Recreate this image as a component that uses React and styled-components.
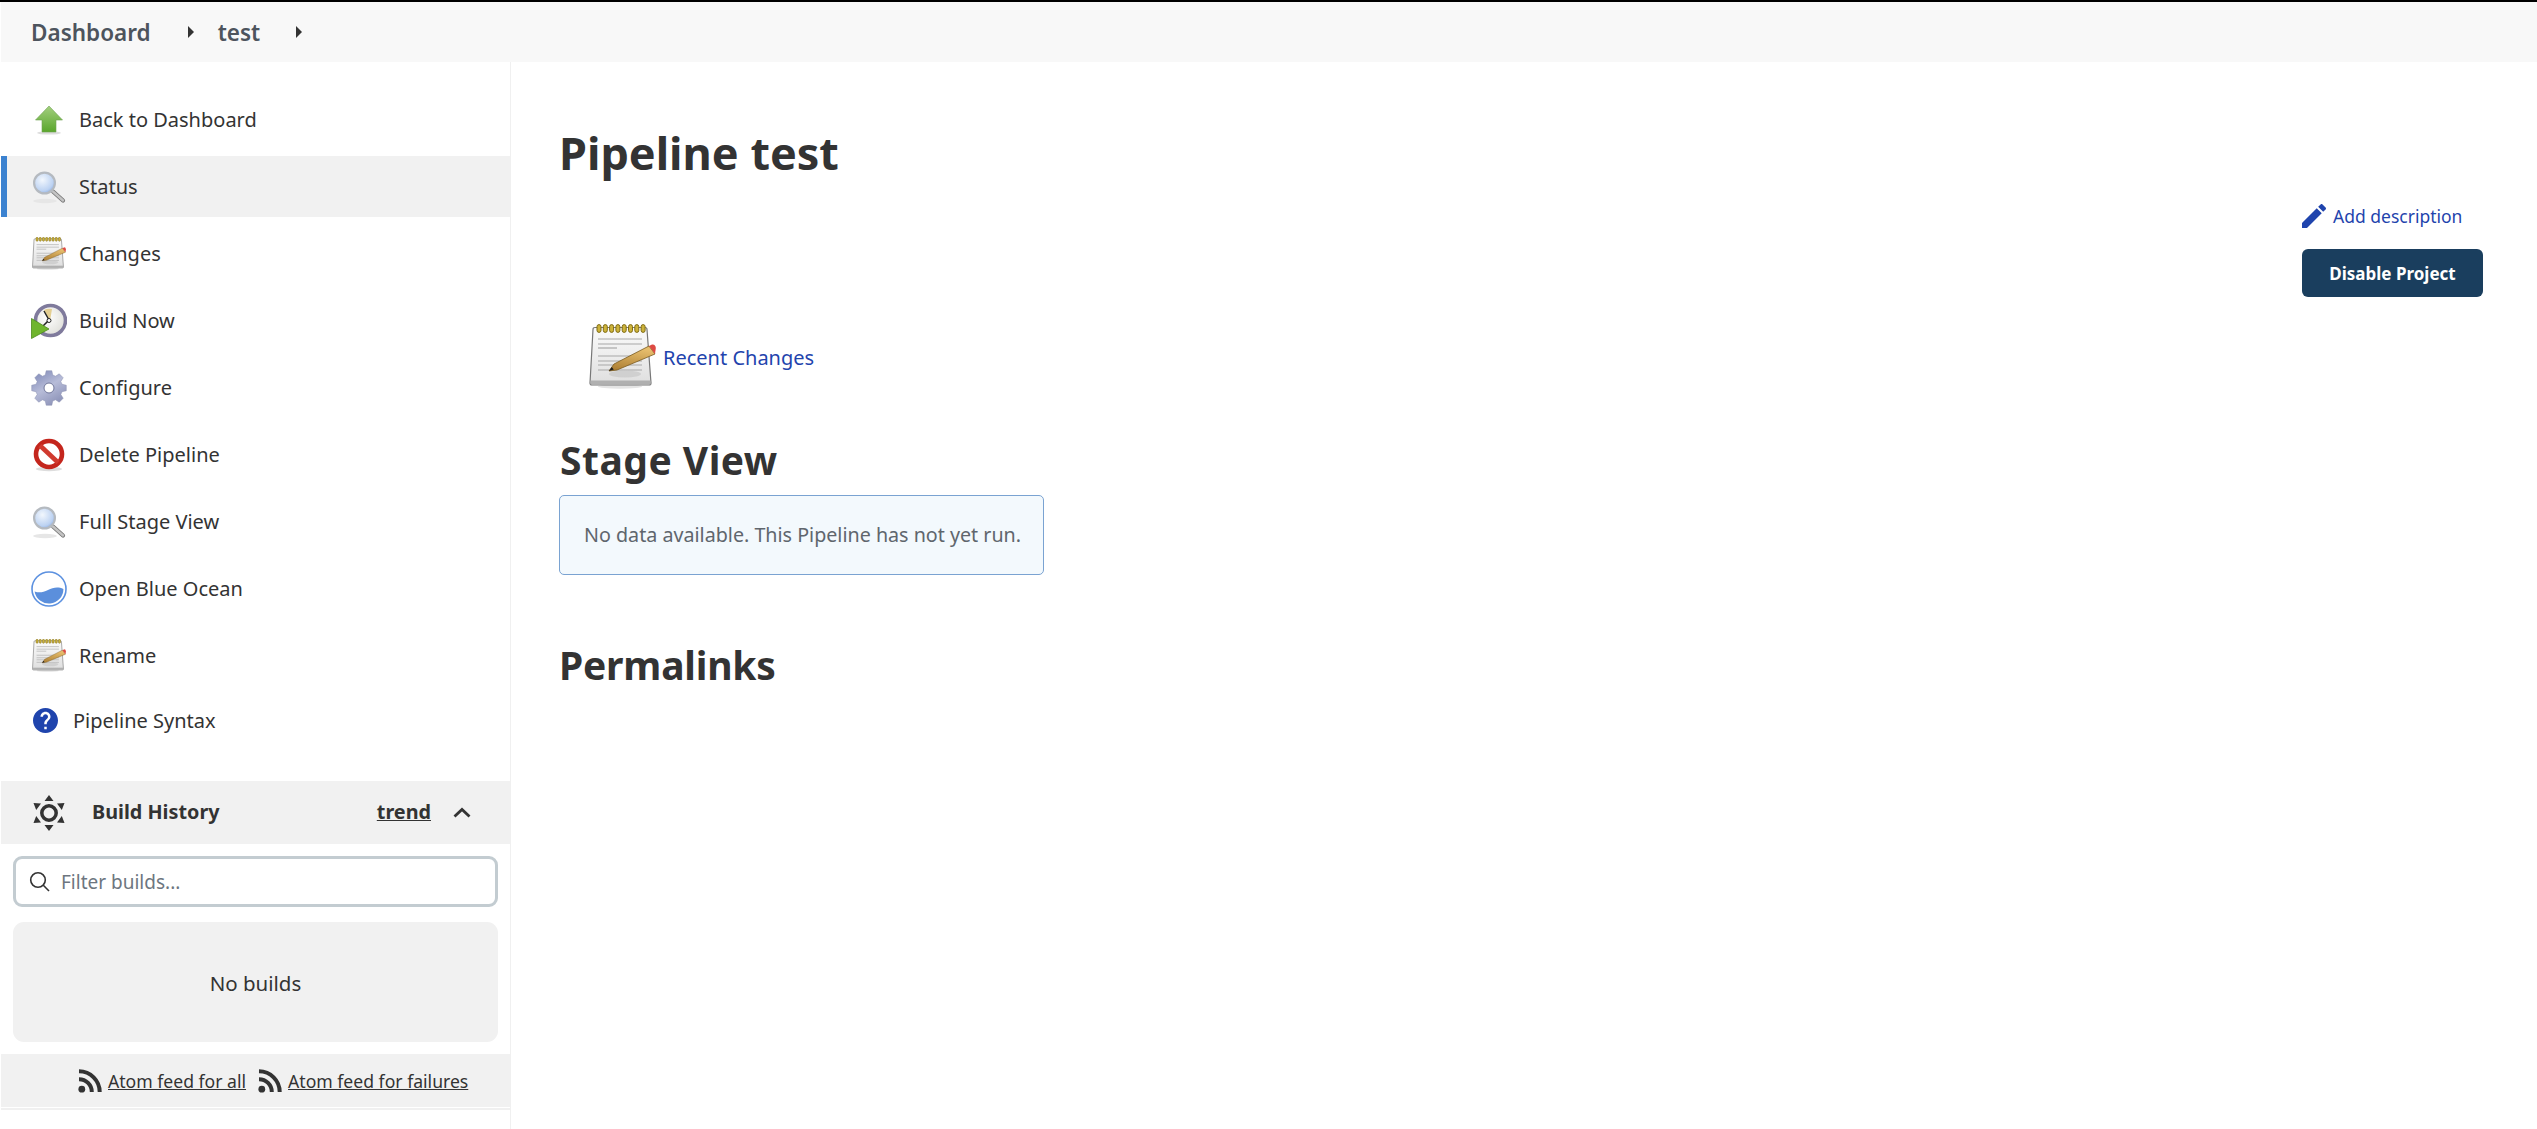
import React from 'react'
import styled, { createGlobalStyle } from 'styled-components'

const GlobalStyle = createGlobalStyle`
  html, body {
    margin: 0;
    padding: 0;
    background: #fff;
  }
  body {
    font-family: "Noto Sans", "Open Sans", sans-serif;
    color: #333;
  }
`

const Page = styled.div`
  width: 2537px;
  height: 1129px;
  display: flex;
  flex-direction: column;
  overflow: hidden;
  border-top: 2px solid #000;
  box-sizing: border-box;
`

const TopBar = styled.nav`
  height: 60px;
  margin-left: 1px;
  background: #f8f8f8;
  display: flex;
  align-items: center;
  padding-left: 30px;
  flex-shrink: 0;
`

const Crumb = styled.a`
  font-size: 22.5px;
  font-weight: 600;
  color: #4d545d;
`

const CrumbArrow = styled.span`
  width: 0;
  height: 0;
  border-top: 6px solid transparent;
  border-bottom: 6px solid transparent;
  border-left: 6px solid #333;
  margin: 0 ${props => props.$after}px 0 ${props => props.$before}px;
`

const Body = styled.div`
  display: flex;
  flex: 1;
  min-height: 0;
`

const Sidebar = styled.aside`
  width: 509px;
  flex-shrink: 0;
  border-right: 1px solid #f0f0f0;
  padding: 27px 0 0 1px;
  display: flex;
  flex-direction: column;
`

const Tasks = styled.div`
  display: flex;
  flex-direction: column;
  gap: 6px;
`

const Task = styled.a`
  height: 61px;
  display: flex;
  align-items: center;
  gap: 12px;
  padding-left: ${props => props.$active ? 24 : 30}px;
  border-left: ${props => props.$active ? '6px solid #3b82d0' : 'none'};
  background: ${props => props.$active ? '#f1f1f1' : 'transparent'};
  font-size: 20px;
  color: #333;
`

const SyntaxTask = styled(Task)`
  height: 56px;
  gap: 15px;
`

const TaskIcon = styled.span`
  width: 36px;
  height: 36px;
  display: flex;
  align-items: center;
  justify-content: center;
  flex-shrink: 0;
`

const HelpWrap = styled.span`
  width: 25px;
  height: 25px;
  margin-left: 2px;
  display: flex;
  flex-shrink: 0;
`

const HistoryHead = styled.div`
  margin-top: 33px;
  height: 63px;
  background: #f1f1f1;
  display: flex;
  align-items: center;
  padding: 0 39px 0 32px;
  font-size: 19.8px;
  font-weight: 700;
`

const HistoryTitle = styled.span`
  margin: 0 0 2px 27px;
  flex: 1;
`

const Trend = styled.a`
  text-decoration: underline;
  margin: 0 22px 2px 0;
`

const HistoryBody = styled.div`
  padding: 12px 12px;
  display: flex;
  flex-direction: column;
  gap: 15px;
`

const FilterBox = styled.div`
  height: 51px;
  box-sizing: border-box;
  border: 3px solid #c3ccd1;
  border-radius: 9px;
  display: flex;
  align-items: center;
  padding-left: 13px;
  gap: 9px;
  color: #333;
`

const FilterInput = styled.input`
  border: none;
  outline: none;
  background: transparent;
  flex: 1;
  font: inherit;
  font-size: 19px;
  color: #333;
  &::placeholder {
    color: #6d7680;
    opacity: 1;
  }
`

const NoBuilds = styled.div`
  height: 120px;
  padding-top: 2px;
  box-sizing: border-box;
  background: #f1f1f1;
  border-radius: 11px;
  display: flex;
  align-items: center;
  justify-content: center;
  font-size: 20.5px;
`

const FeedBar = styled.div`
  height: 53px;
  background: #f1f1f1;
  border-bottom: 1px solid #fff;
  box-shadow: 0 2px 0 #f0f0f0;
  display: flex;
  align-items: center;
  padding-left: 77px;
  font-size: 17.6px;
`

const FeedLink = styled.a`
  display: flex;
  align-items: center;
  gap: 6px;
  margin-right: ${props => props.$space || 0}px;
  span {
    text-decoration: underline;
    margin-top: 1px;
  }
`

const Main = styled.main`
  flex: 1;
  padding: 58px 54px 0 49px;
  display: flex;
  flex-direction: column;
`

const Title = styled.h1`
  margin: 0 0 0 -1px;
  font-size: 45px;
  line-height: 66px;
  font-weight: 700;
  color: #333;
`

const Actions = styled.div`
  align-self: flex-end;
  margin-top: 16px;
  width: 181px;
  display: flex;
  flex-direction: column;
  gap: 19px;
`

const AddLink = styled.a`
  display: flex;
  align-items: center;
  gap: 7px;
  font-size: 17.5px;
  color: #1f44ad;
  height: 28px;
`

const DisableButton = styled.button`
  height: 48px;
  border: none;
  border-radius: 6px;
  background: #1a3e5e;
  color: #fff;
  font-family: inherit;
  font-size: 17px;
  font-weight: 700;
`

const Recent = styled.div`
  display: flex;
  align-items: center;
  gap: 6px;
  margin: 27px 0 0 29px;
  font-size: 20px;
`

const RecentLink = styled.a`
  color: #1f44ad;
  margin: 2px 0 0 1px;
`

const Heading = styled.h2`
  margin: ${props => props.$top}px 0 0 ${props => props.$left || 0}px;
  font-size: 39px;
  line-height: 54px;
  font-weight: 700;
  letter-spacing: ${props => props.$spacing}px;
  color: #333;
`

const EmptyPanel = styled.div`
  width: 485px;
  height: 80px;
  margin: 8px 0 0 -1px;
  box-sizing: border-box;
  background: #f3f9fd;
  border: 1px solid #7aa3d2;
  border-radius: 5px;
  display: flex;
  align-items: center;
  padding: 0 0 1px 24px;
  font-size: 19.7px;
  color: #5f666d;
`

const UpArrow = () => (
  <svg width="32" height="32" viewBox="0 0 32 32">
    <defs>
      <linearGradient id="upGrad" x1="0" y1="0" x2="0" y2="1">
        <stop offset="0" stopColor="#a3cf7f" />
        <stop offset="1" stopColor="#5aa62c" />
      </linearGradient>
    </defs>
    <ellipse cx="16" cy="29" rx="12" ry="1.6" fill="#ddd" />
    <path d="M16 2 L29.5 16 L23 16 L23 28 L9 28 L9 16 L2.5 16 Z" fill="url(#upGrad)" stroke="#6fa352" strokeWidth="0.6" />
  </svg>
)

const Magnifier = () => (
  <svg width="36" height="36" viewBox="0 0 36 36">
    <defs>
      <radialGradient id="lensGrad" cx="0.4" cy="0.35" r="0.75">
        <stop offset="0" stopColor="#f2f7fd" />
        <stop offset="0.7" stopColor="#bcd2f2" />
        <stop offset="1" stopColor="#7fa3dc" />
      </radialGradient>
    </defs>
    <ellipse cx="14" cy="32" rx="12" ry="2.2" fill="#e6e6e6" />
    <line x1="22" y1="22.5" x2="32" y2="31.5" stroke="#777" strokeWidth="4.2" strokeLinecap="round" />
    <line x1="22" y1="22.5" x2="32" y2="31.5" stroke="#c4c4c4" strokeWidth="2.4" strokeLinecap="round" />
    <circle cx="13.5" cy="14" r="10.4" fill="url(#lensGrad)" stroke="#b5bac0" strokeWidth="2.2" />
  </svg>
)

const Notepad = ({ size = 34 }) => (
  <svg width={size} height={size * 65 / 67} viewBox="0 0 67 65">
    <defs>
      <linearGradient id="padGrad" x1="0" y1="0" x2="0" y2="1">
        <stop offset="0" stopColor="#fbfbfb" />
        <stop offset="1" stopColor="#dedede" />
      </linearGradient>
      <linearGradient id="pencilGrad" x1="0" y1="1" x2="0.3" y2="0">
        <stop offset="0" stopColor="#a87a30" />
        <stop offset="1" stopColor="#e6bd6c" />
      </linearGradient>
    </defs>
    <ellipse cx="31" cy="62.5" rx="22" ry="2.2" fill="#e4e4e4" />
    <path d="M6 3.5 H56 Q58 3.5 58 5.5 L62 59 Q62 61 60 61 H3 Q1 61 1 59 L4 5.5 Q4 3.5 6 3.5 Z" fill="url(#padGrad)" stroke="#777" strokeWidth="1.2" />
    <rect x="1.5" y="56.5" width="60" height="4" fill="#b0b0b0" />
    {[0, 1, 2, 3, 4, 5, 6, 7].map(i => (
      <rect key={i} x={8 + i * 6.3} y="0.6" width="4" height="7.8" rx="2" fill="#cdb33a" stroke="#7f6b14" strokeWidth="1" />
    ))}
    {[15, 20, 24, 32, 37, 41, 46].map((y, i) => (
      <line key={y} x1="9" y1={y} x2={i === 2 ? 28 : 53} y2={y} stroke="#a8a8a8" strokeWidth="1.2" />
    ))}
    <ellipse cx="36" cy="50" rx="16" ry="3.5" fill="#c8c8c8" opacity="0.7" />
    <path d="M20 47 L25 40 L60 22 L66 30 L28 46 Z" fill="url(#pencilGrad)" stroke="#7a5a20" strokeWidth="0.8" />
    <path d="M60 22 L63 20.5 Q66.5 20 66.8 24 L66 30 Z" fill="#dd4a42" />
    <path d="M20 47 L22.8 43 L24.8 45.6 Z" fill="#222" />
  </svg>
)

const BuildClock = () => (
  <svg width="36" height="36" viewBox="0 0 36 36">
    <defs>
      <radialGradient id="clockGrad" cx="0.4" cy="0.4" r="0.7">
        <stop offset="0" stopColor="#fff" />
        <stop offset="1" stopColor="#dcdcd6" />
      </radialGradient>
    </defs>
    <circle cx="19.5" cy="17.5" r="15" fill="url(#clockGrad)" stroke="#7f7a9c" strokeWidth="3.6" />
    <path d="M19 18 L13 7 Q17 5 21 6 Z" fill="#e4cf92" />
    <path d="M13 8 L18 17 L12 23" fill="none" stroke="#222" strokeWidth="1.5" />
    <circle cx="18" cy="17.5" r="2" fill="#fff" stroke="#222" />
    <path d="M0.5 15.5 L18 26 L0.5 35.5 Z" fill="#6fb52d" stroke="#4d8a1d" strokeWidth="0.8" />
  </svg>
)

// gear outline, eight teeth
const gearPath = (() => {
  const pts = []
  for (let i = 0; i < 8; i++) {
    const a = (i * Math.PI) / 4 - Math.PI / 2
    const w = 0.2
    pts.push([a - w * 1.4, 13.5], [a - w * 0.8, 17.5], [a + w * 0.8, 17.5], [a + w * 1.4, 13.5])
  }
  return pts
    .map(([a, r], i) => `${i ? 'L' : 'M'}${(18 + r * Math.cos(a)).toFixed(2)} ${(18 + r * Math.sin(a)).toFixed(2)}`)
    .join(' ') + ' Z'
})()

const Gear = () => (
  <svg width="36" height="36" viewBox="0 0 36 36">
    <defs>
      <linearGradient id="gearGrad" x1="0" y1="0" x2="0.6" y2="1">
        <stop offset="0" stopColor="#7a84b4" />
        <stop offset="0.55" stopColor="#b7bcd8" />
        <stop offset="1" stopColor="#8f95ba" />
      </linearGradient>
    </defs>
    <path d={gearPath} fill="url(#gearGrad)" stroke="#8a90b0" strokeWidth="0.5" />
    <circle cx="18" cy="18" r="5" fill="#fff" stroke="#70769a" strokeWidth="1" />
  </svg>
)

const Blocked = () => (
  <svg width="32" height="34" viewBox="0 0 32 34">
    <ellipse cx="16" cy="31" rx="13" ry="2.2" fill="#ddd" />
    <circle cx="16" cy="16" r="13" fill="#fff" stroke="#c4261d" strokeWidth="4.6" />
    <line x1="7" y1="7.5" x2="25" y2="24.5" stroke="#d03a2f" strokeWidth="4.6" />
  </svg>
)

const Ocean = () => (
  <svg width="36" height="36" viewBox="0 0 36 36">
    <circle cx="18" cy="18" r="17" fill="#fff" stroke="#5c91e0" strokeWidth="1.6" />
    <path d="M3.6 20.5 C8 22 12 21.5 17 19 C22 16.5 27 15.5 32.4 18 A14.5 14.5 0 0 1 3.6 20.5 Z" fill="#5b8fdc" />
  </svg>
)

const HelpIcon = () => (
  <HelpWrap>
    <svg width="25" height="25" viewBox="2 2 20 20">
      <path
        fill="#1f44ad"
        d="M12 2C6.48 2 2 6.48 2 12s4.48 10 10 10 10-4.48 10-10S17.52 2 12 2zm1 17h-2v-2h2v2zm2.07-7.75l-.9.92C13.45 12.9 13 13.5 13 15h-2v-.5c0-1.1.45-2.1 1.17-2.83l1.24-1.26c.37-.36.59-.86.59-1.41 0-1.1-.9-2-2-2s-2 .9-2 2H8c0-2.21 1.79-4 4-4s4 1.79 4 4c0 .88-.36 1.68-.93 2.25z"
      />
    </svg>
  </HelpWrap>
)

const SunIcon = () => (
  <svg width="32" height="36" viewBox="0 0 32 36">
    <circle cx="16" cy="18" r="7.2" fill="none" stroke="#333" strokeWidth="3.5" />
    <path d="M16 0 L20.5 6 H11.5 Z M16 36 L20.5 30 H11.5 Z" fill="#333" />
    <path d="M0.5 8 L8 8.5 L3.2 15 Z M31.5 8 L24 8.5 L28.8 15 Z M0.5 28 L8 27.5 L3.2 21 Z M31.5 28 L24 27.5 L28.8 21 Z" fill="#333" />
  </svg>
)

const Chevron = () => (
  <svg width="18" height="11" viewBox="0 0 18 11">
    <polyline points="1.5,9.5 9,2.5 16.5,9.5" fill="none" stroke="#333" strokeWidth="2.8" />
  </svg>
)

const SearchIcon = () => (
  <svg width="21" height="21" viewBox="0 0 21 21">
    <circle cx="9" cy="9" r="7.3" fill="none" stroke="#333" strokeWidth="1.6" />
    <line x1="14.3" y1="14.3" x2="20" y2="20" stroke="#333" strokeWidth="1.6" />
  </svg>
)

const FeedIcon = () => (
  <svg width="24" height="24" viewBox="0 0 24 24">
    <circle cx="3.8" cy="20.2" r="3.4" fill="#333" />
    <path d="M1 10.2 A12.8 12.8 0 0 1 13.8 23" fill="none" stroke="#333" strokeWidth="4" />
    <path d="M1 2.3 A20.7 20.7 0 0 1 21.7 23" fill="none" stroke="#333" strokeWidth="4" />
  </svg>
)

const Pencil = () => (
  <svg width="24" height="24" viewBox="3 3 18 18">
    <path
      fill="#1f44ad"
      d="M3 17.25V21h3.75L17.81 9.94l-3.75-3.75L3 17.25zM20.71 7.04c.39-.39.39-1.02 0-1.41l-2.34-2.34c-.39-.39-1.02-.39-1.41 0l-1.83 1.83 3.75 3.75 1.83-1.83z"
    />
  </svg>
)

const tasks = [
  { label: 'Back to Dashboard', icon: <UpArrow /> },
  { label: 'Status', icon: <Magnifier />, active: true },
  { label: 'Changes', icon: <Notepad /> },
  { label: 'Build Now', icon: <BuildClock /> },
  { label: 'Configure', icon: <Gear /> },
  { label: 'Delete Pipeline', icon: <Blocked /> },
  { label: 'Full Stage View', icon: <Magnifier /> },
  { label: 'Open Blue Ocean', icon: <Ocean /> },
  { label: 'Rename', icon: <Notepad /> },
]

const App = () => {
  return (
    <Page>
      <GlobalStyle />
      <TopBar>
        <Crumb>Dashboard</Crumb>
        <CrumbArrow $before={37} $after={24} />
        <Crumb>test</Crumb>
        <CrumbArrow $before={36} $after={0} />
      </TopBar>
      <Body>
        <Sidebar>
          <Tasks>
            {tasks.map(task => (
              <Task key={task.label} $active={task.active}>
                <TaskIcon>{task.icon}</TaskIcon>
                {task.label}
              </Task>
            ))}
            <SyntaxTask>
              <HelpIcon />
              Pipeline Syntax
            </SyntaxTask>
          </Tasks>
          <HistoryHead>
            <SunIcon />
            <HistoryTitle>Build History</HistoryTitle>
            <Trend>trend</Trend>
            <Chevron />
          </HistoryHead>
          <HistoryBody>
            <FilterBox>
              <SearchIcon />
              <FilterInput placeholder="Filter builds..." />
            </FilterBox>
            <NoBuilds>No builds</NoBuilds>
          </HistoryBody>
          <FeedBar>
            <FeedLink $space={12}>
              <FeedIcon />
              <span>Atom feed for all</span>
            </FeedLink>
            <FeedLink>
              <FeedIcon />
              <span>Atom feed for failures</span>
            </FeedLink>
          </FeedBar>
        </Sidebar>
        <Main>
          <Title>Pipeline test</Title>
          <Actions>
            <AddLink>
              <Pencil />
              Add description
            </AddLink>
            <DisableButton>Disable Project</DisableButton>
          </Actions>
          <Recent>
            <Notepad size={67} />
            <RecentLink>Recent Changes</RecentLink>
          </Recent>
          <Heading $top={44} $spacing={0.5}>Stage View</Heading>
          <EmptyPanel>No data available. This Pipeline has not yet run.</EmptyPanel>
          <Heading $top={63} $left={-1} $spacing={-0.2}>Permalinks</Heading>
        </Main>
      </Body>
    </Page>
  )
}

export default App
